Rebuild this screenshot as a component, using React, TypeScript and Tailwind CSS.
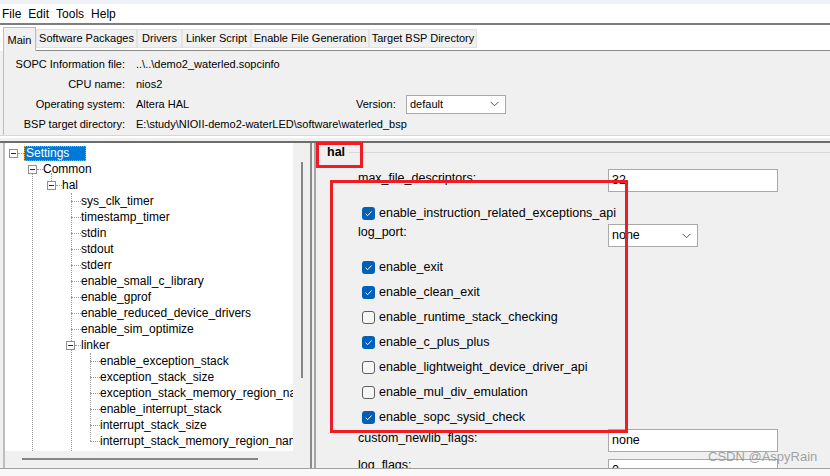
import React from "react";

const Box = () => (
  <span className="relative z-10 flex h-[9px] w-[9px] shrink-0 items-center justify-center border border-[#8f8f8f] bg-white">
    <span className="h-px w-[5px] bg-[#1c2a5a]" />
  </span>
);

const Dot = ({ w }: { w: "w-[6px]" | "w-[10px]" }) => (
  <span className={`${w} h-0 shrink-0 border-t border-dotted border-[#9a9a9a]`} />
);

const Chevron = () => (
  <svg width="9" height="6" viewBox="0 0 9 6" className="shrink-0">
    <path d="M0.5 0.8 L4.5 4.8 L8.5 0.8" stroke="#555" strokeWidth="1" fill="none" />
  </svg>
);

const Check = ({ on }: { on: boolean }) =>
  on ? (
    <span className="flex h-[13px] w-[13px] shrink-0 items-center justify-center rounded-[3px] bg-[#005fb8]">
      <svg width="9" height="9" viewBox="0 0 9 9">
        <path d="M1.6 4.8 L3.6 6.7 L7.6 2.5" stroke="white" strokeWidth="1" fill="none" />
      </svg>
    </span>
  ) : (
    <span className="h-[13px] w-[13px] shrink-0 rounded-[3px] border border-[#5f5f5f] bg-[#f6f6f6]" />
  );

const halLeaves = [
  "sys_clk_timer",
  "timestamp_timer",
  "stdin",
  "stdout",
  "stderr",
  "enable_small_c_library",
  "enable_gprof",
  "enable_reduced_device_drivers",
  "enable_sim_optimize",
];
const linkerLeaves = [
  "enable_exception_stack",
  "exception_stack_size",
  "exception_stack_memory_region_name",
  "enable_interrupt_stack",
  "interrupt_stack_size",
  "interrupt_stack_memory_region_name",
];

const checks: [string, boolean][] = [
  ["enable_exit", true],
  ["enable_clean_exit", true],
  ["enable_runtime_stack_checking", false],
  ["enable_c_plus_plus", true],
  ["enable_lightweight_device_driver_api", false],
  ["enable_mul_div_emulation", false],
  ["enable_sopc_sysid_check", true],
];

export default function App() {
  return (
    <div className="relative flex h-[476px] w-[830px] flex-col overflow-hidden bg-[#f0f0f0] font-['Liberation_Sans',Arial,sans-serif] text-black">
      {/* top strip */}
      <div className="h-[4px] shrink-0 bg-[#eef2f7]" />
      {/* menu */}
      <div className="flex h-[19px] shrink-0 items-center gap-[7px] bg-white pl-[2px] text-[12px]">
        <span>File</span>
        <span>Edit</span>
        <span>Tools</span>
        <span>Help</span>
      </div>
      <div className="h-[2px] shrink-0 bg-[#7d7d7d]" />
      {/* tabs */}
      <div className="flex h-[26px] shrink-0 items-end bg-white pl-[3px] text-[11px]">
        <div className="flex h-[24px] w-[33px] items-start justify-center border-x border-t border-[#bdbdbd] bg-[#f0f0f0] pt-[4px]">
          Main
        </div>
        <div className="flex flex-1 items-end self-stretch">
          <div className="flex h-full flex-1 flex-col justify-end">
            <div className="flex h-[19px] items-center">
              <div className="flex h-[19px] w-[101px] items-center justify-center border border-[#e2e2e2] bg-[#f0f0f0]">Software Packages</div>
              <div className="flex h-[19px] w-[45px] items-center justify-center border border-[#e2e2e2] bg-[#f0f0f0]">Drivers</div>
              <div className="flex h-[19px] w-[69px] items-center justify-center border border-[#e2e2e2] bg-[#f0f0f0]">Linker Script</div>
              <div className="flex h-[19px] w-[118px] items-center justify-center border border-[#e2e2e2] bg-[#f0f0f0]">Enable File Generation</div>
              <div className="flex h-[19px] w-[108px] items-center justify-center border border-[#e2e2e2] bg-[#f0f0f0]">Target BSP Directory</div>
            </div>
            <div className="h-[3px] border-b border-[#8a8a8a]" />
          </div>
        </div>
      </div>
      {/* info panel */}
      <div className="ml-[3px] flex h-[84px] shrink-0 flex-col border-l border-[#bdbdbd] pt-[3px] text-[11px]">
        <div className="flex h-[20px] items-center">
          <span className="w-[121px] text-right">SOPC Information file:</span>
          <span className="pl-[11px]">..\..\demo2_waterled.sopcinfo</span>
        </div>
        <div className="flex h-[20px] items-center">
          <span className="w-[121px] text-right">CPU name:</span>
          <span className="pl-[11px]">nios2</span>
        </div>
        <div className="flex h-[20px] items-center">
          <span className="w-[121px] text-right">Operating system:</span>
          <span className="w-[231px] pl-[11px]">Altera HAL</span>
          <span className="w-[50px]">Version:</span>
          <div className="flex h-[19px] w-[100px] items-center justify-between border border-[#a9a9a9] bg-white pl-[3px] pr-[6px]">
            <span>default</span>
            <Chevron />
          </div>
        </div>
        <div className="flex h-[20px] items-center">
          <span className="w-[121px] text-right">BSP target directory:</span>
          <span className="pl-[11px]">E:\study\NIOII-demo2-waterLED\software\waterled_bsp</span>
        </div>
      </div>
      <div className="h-px shrink-0 bg-[#d6d6d6]" />
      <div className="h-[2px] shrink-0 bg-white" />
      <div className="h-[3px] shrink-0" />
      <div className="h-[2px] shrink-0 bg-[#6d6d6d]" />
      {/* split area */}
      <div className="flex h-[325px] shrink-0 pl-[3px]">
        {/* left tree panel */}
        <div className="flex w-[309px] shrink-0 flex-col border-x-2 border-l-[#bdbdbd] border-r-[#8a8a8a]">
          <div className="flex h-[308px]">
            <div className="relative w-[288px] overflow-hidden bg-white pt-[2px] text-[12px]">
              <span className="absolute left-[27px] top-[30px] bottom-0 w-0 border-l border-dotted border-[#9a9a9a]" />
              <span className="absolute left-[46px] top-[30px] h-[8px] w-0 border-l border-dotted border-[#9a9a9a]" />
              <span className="absolute left-[66px] top-[50px] bottom-0 w-0 border-l border-dotted border-[#9a9a9a]" />
              <span className="absolute left-[85px] top-[210px] h-[88px] w-0 border-l border-dotted border-[#9a9a9a]" />
              <div className="relative flex h-[16px] items-center pl-[4px]">
                <Box />
                <Dot w="w-[6px]" />
                <span className="flex h-[15px] w-[62px] items-center border border-dotted border-[#e8a33c] bg-[#0078d7] pl-[1px] text-white">
                  Settings
                </span>
              </div>
              <div className="relative flex h-[16px] items-center pl-[23px]">
                <Box />
                <Dot w="w-[6px]" />
                <span className="whitespace-nowrap">Common</span>
              </div>
              <div className="relative flex h-[16px] items-center pl-[42px]">
                <Box />
                <Dot w="w-[6px]" />
                <span className="whitespace-nowrap">hal</span>
              </div>
              {halLeaves.map((t) => (
                <div key={t} className="relative flex h-[16px] items-center pl-[66px]">
                  <Dot w="w-[10px]" />
                  <span className="whitespace-nowrap">{t}</span>
                </div>
              ))}
              <div className="relative flex h-[16px] items-center pl-[61px]">
                <Box />
                <Dot w="w-[6px]" />
                <span className="whitespace-nowrap">linker</span>
              </div>
              {linkerLeaves.map((t) => (
                <div key={t} className="relative flex h-[16px] items-center pl-[85px]">
                  <Dot w="w-[10px]" />
                  <span className="whitespace-nowrap">{t}</span>
                </div>
              ))}
            </div>
            <div className="w-[17px] pl-[8px] pt-[19px]">
              <div className="h-[216px] w-[2px] bg-[#858585]" />
            </div>
          </div>
          <div className="h-[17px] pl-[17px] pt-[7px]">
            <div className="h-[2px] w-[236px] bg-[#858585]" />
          </div>
        </div>
        {/* right panel */}
        <div className="ml-[2px] flex flex-1 flex-col overflow-hidden border-l-2 border-[#a5a5a5] text-[12.5px]">
          <div className="flex h-[18px] shrink-0 items-center">
            <span className="pl-[11px] pr-[4px] font-bold">hal</span>
            <div className="h-px flex-1 bg-[#d7d7d7]" />
          </div>
          <div className="mt-[8px] flex h-[23px] shrink-0 items-start pl-[42px]">
            <span className="w-[250px] leading-[18px]">max_file_descriptors:</span>
            <div className="flex h-[23px] w-[170px] items-center border border-[#a9a9a9] bg-white pl-[3px]">32</div>
          </div>
          <div className="mt-[12px] flex h-[18px] shrink-0 items-center gap-[4px] pl-[46px]">
            <Check on={true} />
            <span>enable_instruction_related_exceptions_api</span>
          </div>
          <div className="mt-[2px] flex h-[23px] shrink-0 items-start pl-[42px]">
            <span className="w-[250px] leading-[16px]">log_port:</span>
            <div className="flex h-[23px] w-[90px] items-center justify-between border border-[#a9a9a9] bg-white pl-[3px] pr-[6px]">
              <span>none</span>
              <Chevron />
            </div>
          </div>
          <div className="mt-[4px] flex shrink-0 flex-col">
            {checks.map(([t, on]) => (
              <div key={t} className="mt-[7px] flex h-[18px] items-center gap-[4px] pl-[46px]">
                <Check on={on} />
                <span>{t}</span>
              </div>
            ))}
          </div>
          <div className="mt-[3px] flex h-[23px] shrink-0 items-start pl-[42px]">
            <span className="w-[250px] leading-[18px]">custom_newlib_flags:</span>
            <div className="flex h-[23px] w-[170px] items-center border border-[#a9a9a9] bg-white pl-[3px]">none</div>
          </div>
          <div className="mt-[7px] flex h-[23px] shrink-0 items-start pl-[42px]">
            <span className="w-[250px] leading-[12px]">log_flags:</span>
            <div className="flex h-[23px] w-[170px] items-center border border-[#a9a9a9] bg-white pl-[3px]">0</div>
          </div>
        </div>
      </div>
      <div className="h-[8px] shrink-0 border-t border-[#a0a0a0] bg-[#f8f8f8]" />

      {/* annotations */}
      <div className="absolute left-[316px] top-[142px] h-[26px] w-[47px] border-[3px] border-[#ee1c25]" />
      <div className="absolute left-[330px] top-[180px] h-[253px] w-[298px] border-[3px] border-[#ee1c25]" />
      <div className="absolute left-[708px] top-[449px] text-[13px] leading-[16px] text-[#8c8c8c]/80">CSDN @AspyRain</div>
    </div>
  );
}
